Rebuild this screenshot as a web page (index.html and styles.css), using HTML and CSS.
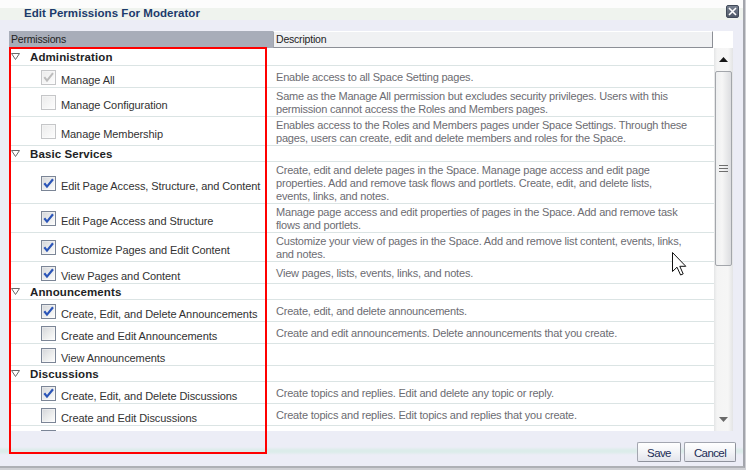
FILE: index.html
```html
<!DOCTYPE html>
<html>
<head>
<meta charset="utf-8">
<link rel="stylesheet" href="styles.css">
</head>
<body>
<div class="dialog">
  <div class="titlebar">
    <span class="title">Edit Permissions For Moderator</span>
    <span class="close"><svg width="11" height="11" viewBox="0 0 11 11"><path d="M2 2 L9 9 M9 2 L2 9" stroke="#fff" stroke-width="1.6" fill="none"/></svg></span>
  </div>

  <div class="table">
    <div class="thead">
      <div class="th-perm">Permissions</div>
      <div class="th-desc">Description</div>
      <div class="th-corner"></div>
    </div>
    <div class="tbody">
      <div class="rows">
        <div class="group first"><svg class="tri" width="9" height="7" viewBox="0 0 9 7"><path d="M0.5 0.5 H8.5 L4.5 6.5 Z" fill="none" stroke="#6a6a6a"/></svg><span>Administration</span></div>
        <div class="row">
          <div class="cell-perm"><div class="chk"><span class="cb dis"><svg width="13" height="13" viewBox="0 0 13 13"><path d="M2.3 6.2 L5 9.6 L11 2.2" fill="none" stroke="#bcbcbc" stroke-width="2"/></svg></span><span class="lbl">Manage All</span></div></div>
          <div class="cell-desc"><span>Enable access to all Space Setting pages.</span></div>
        </div>
        <div class="row">
          <div class="cell-perm"><div class="chk"><span class="cb dis"></span><span class="lbl">Manage Configuration</span></div></div>
          <div class="cell-desc"><span>Same as the Manage All permission but excludes security privileges. Users with this<br>permission cannot access the Roles and Members pages.</span></div>
        </div>
        <div class="row">
          <div class="cell-perm"><div class="chk"><span class="cb dis"></span><span class="lbl">Manage Membership</span></div></div>
          <div class="cell-desc"><span>Enables access to the Roles and Members pages under Space Settings. Through these<br>pages, users can create, edit and delete members and roles for the Space.</span></div>
        </div>

        <div class="group"><svg class="tri" width="9" height="7" viewBox="0 0 9 7"><path d="M0.5 0.5 H8.5 L4.5 6.5 Z" fill="none" stroke="#6a6a6a"/></svg><span>Basic Services</span></div>
        <div class="row">
          <div class="cell-perm"><div class="chk"><span class="cb"><svg width="13" height="13" viewBox="0 0 13 13"><path d="M2.3 6.2 L5 9.6 L11 2.2" fill="none" stroke="#2b55b8" stroke-width="2.2"/></svg></span><span class="lbl">Edit Page Access, Structure, and Content</span></div></div>
          <div class="cell-desc"><span>Create, edit and delete pages in the Space. Manage page access and edit page<br>properties. Add and remove task flows and portlets. Create, edit, and delete lists,<br>events, links, and notes.</span></div>
        </div>
        <div class="row">
          <div class="cell-perm"><div class="chk"><span class="cb"><svg width="13" height="13" viewBox="0 0 13 13"><path d="M2.3 6.2 L5 9.6 L11 2.2" fill="none" stroke="#2b55b8" stroke-width="2.2"/></svg></span><span class="lbl">Edit Page Access and Structure</span></div></div>
          <div class="cell-desc"><span>Manage page access and edit properties of pages in the Space. Add and remove task<br>flows and portlets.</span></div>
        </div>
        <div class="row">
          <div class="cell-perm"><div class="chk"><span class="cb"><svg width="13" height="13" viewBox="0 0 13 13"><path d="M2.3 6.2 L5 9.6 L11 2.2" fill="none" stroke="#2b55b8" stroke-width="2.2"/></svg></span><span class="lbl">Customize Pages and Edit Content</span></div></div>
          <div class="cell-desc"><span>Customize your view of pages in the Space. Add and remove list content, events, links,<br>and notes.</span></div>
        </div>
        <div class="row">
          <div class="cell-perm"><div class="chk"><span class="cb"><svg width="13" height="13" viewBox="0 0 13 13"><path d="M2.3 6.2 L5 9.6 L11 2.2" fill="none" stroke="#2b55b8" stroke-width="2.2"/></svg></span><span class="lbl">View Pages and Content</span></div></div>
          <div class="cell-desc"><span>View pages, lists, events, links, and notes.</span></div>
        </div>

        <div class="group"><svg class="tri" width="9" height="7" viewBox="0 0 9 7"><path d="M0.5 0.5 H8.5 L4.5 6.5 Z" fill="none" stroke="#6a6a6a"/></svg><span>Announcements</span></div>
        <div class="row">
          <div class="cell-perm"><div class="chk"><span class="cb"><svg width="13" height="13" viewBox="0 0 13 13"><path d="M2.3 6.2 L5 9.6 L11 2.2" fill="none" stroke="#2b55b8" stroke-width="2.2"/></svg></span><span class="lbl">Create, Edit, and Delete Announcements</span></div></div>
          <div class="cell-desc"><span>Create, edit, and delete announcements.</span></div>
        </div>
        <div class="row">
          <div class="cell-perm"><div class="chk"><span class="cb"></span><span class="lbl">Create and Edit Announcements</span></div></div>
          <div class="cell-desc"><span>Create and edit announcements. Delete announcements that you create.</span></div>
        </div>
        <div class="row">
          <div class="cell-perm"><div class="chk"><span class="cb"></span><span class="lbl">View Announcements</span></div></div>
          <div class="cell-desc"></div>
        </div>

        <div class="group"><svg class="tri" width="9" height="7" viewBox="0 0 9 7"><path d="M0.5 0.5 H8.5 L4.5 6.5 Z" fill="none" stroke="#6a6a6a"/></svg><span>Discussions</span></div>
        <div class="row">
          <div class="cell-perm"><div class="chk"><span class="cb"><svg width="13" height="13" viewBox="0 0 13 13"><path d="M2.3 6.2 L5 9.6 L11 2.2" fill="none" stroke="#2b55b8" stroke-width="2.2"/></svg></span><span class="lbl">Create, Edit, and Delete Discussions</span></div></div>
          <div class="cell-desc"><span>Create topics and replies. Edit and delete any topic or reply.</span></div>
        </div>
        <div class="row">
          <div class="cell-perm"><div class="chk"><span class="cb"></span><span class="lbl">Create and Edit Discussions</span></div></div>
          <div class="cell-desc"><span>Create topics and replies. Edit topics and replies that you create.</span></div>
        </div>
        <div class="row">
          <div class="cell-perm"><div class="chk"><span class="cb"></span></div></div>
          <div class="cell-desc"></div>
        </div>
      </div>

      <div class="scroll">
        <div class="sb-up"><svg width="9" height="5" viewBox="0 0 9 5"><path d="M0 5 L4.5 0 L9 5 Z" fill="#161616"/></svg></div>
        <div class="sb-thumb"><svg width="9" height="9" viewBox="0 0 9 9"><path d="M0 1.5 H9 M0 4.5 H9 M0 7.5 H9" stroke="#6e6e6e" stroke-width="1"/></svg></div>
        <div class="sb-track"></div>
        <div class="sb-down"><svg width="9" height="5" viewBox="0 0 9 5"><path d="M0 0 L9 0 L4.5 5 Z" fill="#6a6a6a"/></svg></div>
      </div>
    </div>
  </div>

  <div class="footer">
    <button class="btn save">Save</button>
    <button class="btn cancel">Cancel</button>
  </div>

  <div class="highlight"></div>
  <svg class="cursor" width="16" height="24" viewBox="0 0 16 24"><path d="M0.5 0.5 L0.5 19.5 L5 15.2 L8.6 23 L11.2 21.9 L7.8 14.3 L13.8 14.3 Z" fill="#fff" stroke="#111" stroke-width="1" stroke-linejoin="miter"/></svg>
</div>
</body>
</html>
```

FILE: styles.css
```css
html, body {
  margin: 0;
  padding: 0;
}
body {
  background: #cfd0d4;
  font-family: "Liberation Sans", Arial, sans-serif;
  width: 746px;
  height: 470px;
  overflow: hidden;
}
.dialog {
  position: relative;
  width: 743px;
  height: 466px;
  border-right: 2px solid #a3a5ac;
  border-bottom: 2px solid #aeb0b5;
  background: linear-gradient(to bottom, #ecedf6 0, #ecedf6 447px, #dcecea 450px, #dcecea 452px, #ecedf6 455px, #ecedf6 100%);
  display: flex;
  flex-direction: column;
  overflow: hidden;
}
.titlebar {
  height: 20px;
  display: flex;
  align-items: flex-start;
  background: linear-gradient(to bottom, #fcfcfc 0, #fcfcfc 8px, #eff3ee 8px, #eff3ee 20px);
}
.title {
  margin: 6px 0 0 24px;
  font-size: 11.5px;
  line-height: 14px;
  font-weight: bold;
  color: #1c3b6b;
  letter-spacing: 0.05px;
}
.close {
  margin: 5px 4px 0 auto;
  width: 13px;
  height: 13px;
  box-sizing: border-box;
  border: 1px solid #414a59;
  border-radius: 2px;
  background: linear-gradient(to bottom, #77808f, #4f5868);
  display: flex;
  align-items: center;
  justify-content: center;
}
.table {
  margin: 11px 0 0 9px;
  width: 724px;
}
.thead {
  display: flex;
  height: 17px;
}
.th-perm {
  width: 264px;
  box-sizing: border-box;
  padding-left: 2px;
  background: #a8adb9;
  font-size: 10.5px;
  line-height: 17px;
  color: #232323;
  letter-spacing: -0.2px;
}
.th-desc {
  width: 440px;
  box-sizing: border-box;
  border-style: solid;
  border-width: 1px;
  border-color: #ffffff #8c8f96 #8c8f96 #a2a5ac;
  background: #f0f1f3;
  padding-left: 2px;
  font-size: 10.5px;
  line-height: 15px;
  color: #232323;
  letter-spacing: -0.2px;
}
.th-corner {
  flex: 1;
  background: #ffffff;
}
.tbody {
  display: flex;
  height: 383px;
  background: #ffffff;
}
.rows {
  width: 705px;
  overflow: hidden;
}
.group {
  height: 15px;
  border-bottom: 1px solid #dbe4e4;
  display: flex;
  align-items: center;
  padding-left: 2px;
  font-size: 11.5px;
  font-weight: bold;
  color: #1e1f26;
  letter-spacing: 0.1px;
}
.group.first {
  height: 17px;
}
.group .tri {
  margin-right: 10px;
  flex: none;
}
.row {
  display: flex;
  border-bottom: 1px solid #dbe4e4;
}
.cell-perm {
  width: 265px;
  flex: none;
  box-sizing: border-box;
  padding-left: 32px;
  padding-top: 1px;
  display: flex;
  align-items: center;
}
.chk {
  display: flex;
  align-items: flex-end;
}
.cb {
  width: 15px;
  height: 15px;
  box-sizing: border-box;
  flex: none;
  border: 1px solid #7b8596;
  background: linear-gradient(135deg, #d3d5d9 0%, #eceded 55%, #fdfdfd 100%);
  box-shadow: inset 0 0 0 1px rgba(255, 255, 255, 0.35);
  display: block;
}
.cb svg {
  display: block;
}
.cb.dis {
  border-color: #c5c6c8;
  background: linear-gradient(135deg, #ebebeb 0%, #f6f6f6 60%, #fdfdfd 100%);
}
.lbl {
  margin-left: 5px;
  margin-bottom: -2px;
  font-size: 11px;
  line-height: 13px;
  color: #323232;
  letter-spacing: -0.08px;
  white-space: nowrap;
}
.cell-desc {
  flex: 1;
  box-sizing: border-box;
  min-height: 21px;
  padding: 2px 0 0 2px;
  display: flex;
  align-items: center;
  font-size: 11px;
  line-height: 13px;
  color: #6c6c72;
  letter-spacing: -0.2px;
  white-space: nowrap;
}
.scroll {
  width: 19px;
  display: flex;
  flex-direction: column;
  background: linear-gradient(to right, #e4e5e6 0, #f4f4f4 3px, #f6f6f6 14px, #e3e4e5 19px);
}
.sb-up {
  height: 23px;
  box-sizing: border-box;
  padding: 9px 0 0 5px;
}
.sb-up svg, .sb-down svg, .sb-thumb svg {
  display: block;
}
.sb-thumb {
  height: 195px;
  margin: 0 1px;
  box-sizing: border-box;
  border: 1px solid #a3a6ab;
  border-radius: 2px;
  background: linear-gradient(to right, #eeeff0 0, #f6f6f6 40%, #dcdde0 100%);
  display: flex;
  align-items: center;
  justify-content: center;
}
.sb-track {
  flex: 1;
}
.sb-down {
  height: 22px;
  box-sizing: border-box;
  padding: 8px 0 0 5px;
}
.footer {
  margin-top: 11px;
  display: flex;
  justify-content: flex-end;
  gap: 3px;
  padding-right: 7px;
}
.btn {
  height: 20px;
  box-sizing: border-box;
  padding: 2px 0 0 0;
  border: 1px solid #a3a6b0;
  border-right-color: #8f929c;
  border-bottom-color: #8f929c;
  border-radius: 2px;
  background: linear-gradient(to bottom, #ffffff 0%, #f3f4f7 50%, #e3e5ec 100%);
  font-family: "Liberation Sans", Arial, sans-serif;
  font-size: 11.5px;
  line-height: 14px;
  letter-spacing: -0.6px;
  color: #1b2c55;
}
.save {
  width: 44px;
}
.cancel {
  width: 52px;
}
.highlight {
  position: absolute;
  left: 9px;
  top: 47px;
  width: 258px;
  height: 407px;
  box-sizing: border-box;
  border: 2px solid #ff0000;
}
.cursor {
  position: absolute;
  left: 672px;
  top: 252px;
}
```
